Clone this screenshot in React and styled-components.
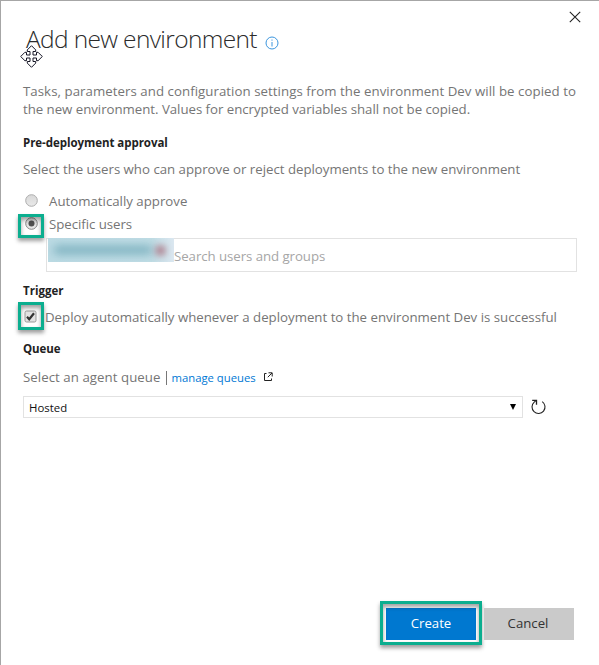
import React from 'react';
import styled, { createGlobalStyle } from 'styled-components';

const Global = createGlobalStyle`
  * { box-sizing: border-box; }
  body { margin: 0; background: #fff; overflow: hidden; }
`;

const Dialog = styled.main`
  display: flex;
  flex-direction: column;
  width: 599px;
  height: 665px;
  padding: 0 22px 0 22px;
  border-top: 1px solid #a6a6a6;
  border-left: 1px solid #a6a6a6;
  background: #fff;
  color: #757575;
  font: 13.25px/18px "Open Sans", "Noto Sans", sans-serif;
  white-space: nowrap;
`;

const Header = styled.header`
  position: relative;
  display: flex;
  align-items: flex-start;
  height: 81px;
  padding: 22px 0 0 3px;
`;

const Title = styled.h1`
  margin: 0;
  color: #2b2b2b;
  font-size: 24.5px;
  font-weight: 300;
  line-height: 32px;
  letter-spacing: -0.64px;
`;

const InfoIcon = styled.svg`
  width: 14px;
  height: 14px;
  margin: 13px 0 0 8px;
`;

const CloseButton = styled.button`
  display: flex;
  width: 12px;
  height: 12px;
  margin: -12px -4px 0 auto;
  padding: 0;
  border: 0;
  background: none;
`;

const MoveCursor = styled.svg`
  position: absolute;
  left: -3px;
  top: 44px;
  width: 23px;
  height: 23px;
`;

const Intro = styled.p`
  width: 553px;
  margin: 0;
`;

const IntroLine = styled.span`
  display: block;
  letter-spacing: ${(p) => p.$spacing || 0}px;
`;

const Heading = styled.h2`
  height: 18px;
  margin: ${(p) => p.$top}px 0 0;
  color: #222;
  font-size: 11.5px;
  font-weight: 700;
  line-height: 18px;
  letter-spacing: ${(p) => p.$spacing || 0}px;
`;

const Line = styled.div`
  display: flex;
  align-items: center;
  height: 18px;
  margin-top: ${(p) => p.$top}px;
`;

const Option = styled.label`
  position: relative;
  display: flex;
  align-items: center;
  gap: ${(p) => p.$gap}px;
  height: 18px;
  margin-top: ${(p) => p.$top}px;
  padding-left: ${(p) => p.$indent}px;
  letter-spacing: ${(p) => p.$spacing || 0}px;
`;

const Control = styled.svg`
  flex: none;
  width: 13px;
  height: 13px;
  margin-top: -1px;
  overflow: visible;
`;

const Highlight = styled.span`
  position: absolute;
  left: ${(p) => p.$left}px;
  top: ${(p) => p.$top}px;
  width: ${(p) => p.$width}px;
  height: ${(p) => p.$height}px;
  border: 3px solid #0bae8f;
  box-shadow: 0 3px 4px rgba(0, 0, 0, 0.38), inset 0 3px 4px rgba(0, 0, 0, 0.38);
  pointer-events: none;
`;

const UserField = styled.div`
  display: flex;
  align-items: flex-start;
  width: 531px;
  height: 34px;
  margin: 5px 0 0 23px;
  padding-left: 1px;
  border: 1px solid #e2e2e2;
  color: #a6a6a6;
`;

const UserChip = styled.div`
  display: flex;
  align-items: center;
  width: 126px;
  height: 24px;
  margin-top: -1px;
  overflow: hidden;
  background: linear-gradient(90deg, #bcdbe4, #c0dde5 82%, #dbe7f0);
`;

const BlurredName = styled.span`
  width: 98px;
  height: 8px;
  margin-left: 6px;
  background: #77adbc;
  filter: blur(5px);
`;

const BlurredRemove = styled.span`
  width: 9px;
  height: 9px;
  margin-left: 4px;
  background: #ac7685;
  filter: blur(3.5px);
`;

const Placeholder = styled.span`
  margin-top: 8px;
  letter-spacing: -0.06px;
`;

const Divider = styled.span`
  width: 1px;
  height: 14px;
  margin: 1px 5px 0;
  background: #777;
`;

const QueueLink = styled.a`
  color: #0078d4;
  font-size: 11.3px;
  margin-top: 1px;
`;

const ExternalIcon = styled.svg`
  width: 10px;
  height: 10px;
  margin: -1px 0 0 7px;
`;

const QueueRow = styled.div`
  display: flex;
  align-items: center;
  gap: 8px;
  margin-top: 10px;
`;

const Select = styled.div`
  display: flex;
  align-items: center;
  justify-content: space-between;
  width: 500px;
  height: 22px;
  padding: 1px 6px 0 5px;
  border: 1px solid #e2e2e2;
  color: #111;
  font-size: 11.4px;
`;

const Arrow = styled.svg`
  width: 6px;
  height: 6px;
  margin-top: -2px;
`;

const RefreshIcon = styled.svg`
  width: 15px;
  height: 16px;
`;

const Footer = styled.footer`
  display: flex;
  justify-content: flex-end;
  gap: 8px;
  margin: auto 3px 25px 0;
`;

const Button = styled.button`
  position: relative;
  width: 90px;
  height: 32px;
  padding: ${(p) => (p.$primary ? '0 0 2px' : '0 2px 2px 0')};
  border: 0;
  background: ${(p) => (p.$primary ? '#0078d0' : '#cacaca')};
  color: ${(p) => (p.$primary ? '#fff' : '#333')};
  font: 13.2px/18px "Open Sans", "Noto Sans", sans-serif;
`;

const Radio = ({ checked }) => (
  <Control viewBox="0 0 13 13">
    <defs>
      <linearGradient id="radioFill" x1="0" y1="0" x2="0" y2="1">
        <stop offset="0" stopColor="#d8d8d8" />
        <stop offset="1" stopColor="#e9e9e9" />
      </linearGradient>
    </defs>
    <circle cx="6.5" cy="6.5" r="5.8" fill="url(#radioFill)" stroke={checked ? '#888' : '#adadad'} />
    {checked && <circle cx="6.5" cy="6.5" r="3" fill="#505050" />}
  </Control>
);

export default function App() {
  return (
    <>
      <Global />
      <Dialog>
        <Header>
          <Title>Add new environment</Title>
          <InfoIcon viewBox="0 0 14 14" fill="none" stroke="#3c96de">
            <circle cx="7" cy="7" r="6" />
            <path d="M7 6v4.5M7 3.5v1.2" />
          </InfoIcon>
          <CloseButton aria-label="Close">
            <svg width="12" height="12" viewBox="0 0 12 12" fill="none" stroke="#222" strokeWidth="1.1">
              <path d="M.8.8 11.2 11.2M11.2.8.8 11.2" />
            </svg>
          </CloseButton>
          <MoveCursor viewBox="0 0 23 23" fill="#fff" stroke="#151525">
            <path d="M11.5.7 7.3 4.9v1.6h2.7V10H6.5V7.3H4.9L.7 11.5l4.2 4.2h1.6V13H10v3.5H7.3v1.6l4.2 4.2 4.2-4.2v-1.6H13V13h3.5v2.7h1.6l4.2-4.2-4.2-4.2h-1.6V10H13V6.5h2.7V4.9z" />
          </MoveCursor>
        </Header>

        <Intro>
          <IntroLine $spacing={0.05}>
            Tasks, parameters and configuration settings from the environment Dev will be copied to
          </IntroLine>
          <IntroLine $spacing={-0.03}>
            the new environment. Values for encrypted variables shall not be copied.
          </IntroLine>
        </Intro>

        <Heading $top={16} $spacing={-0.05}>Pre-deployment approval</Heading>
        <Line $top={8}>
          <IntroLine $spacing={-0.01}>
            Select the users who can approve or reject deployments to the new environment
          </IntroLine>
        </Line>
        <Option $top={14} $gap={11} $indent={2}>
          <Radio />
          Automatically approve
        </Option>
        <Option $top={5} $gap={11} $indent={2} $spacing={-0.05}>
          <Radio checked />
          Specific users
          <Highlight $left={-5} $top={-1} $width={26} $height={24} />
        </Option>
        <UserField>
          <UserChip>
            <BlurredName />
            <BlurredRemove />
          </UserChip>
          <Placeholder>Search users and groups</Placeholder>
        </UserField>

        <Heading $top={10}>Trigger</Heading>
        <Option $top={8} $gap={8} $indent={1}>
          <Control viewBox="0 0 13 13">
            <rect x="1" y="1" width="11" height="11" rx="1.5" fill="#e2e2e2" stroke="#999" />
            <path d="M3 6.8 5.2 9.2 10 3.3" fill="none" stroke="#333" strokeWidth="2.2" />
          </Control>
          Deploy automatically whenever a deployment to the environment Dev is successful
          <Highlight $left={-5} $top={-6} $width={26} $height={28} />
        </Option>

        <Heading $top={14} $spacing={-0.1}>Queue</Heading>
        <Line $top={10}>
          <IntroLine $spacing={0.05}>Select an agent queue</IntroLine>
          <Divider />
          <QueueLink>manage queues</QueueLink>
          <ExternalIcon viewBox="0 0 10 10" fill="none" stroke="#222">
            <path d="M3.5 1.5h-2v7h7v-2M5.5.8h3.7v3.7M9 1 4.8 5.2" />
          </ExternalIcon>
        </Line>
        <QueueRow>
          <Select>
            Hosted
            <Arrow viewBox="0 0 6 6"><path d="M0 0h6L3 6z" /></Arrow>
          </Select>
          <RefreshIcon viewBox="0 0 15 16" fill="none" stroke="#222" strokeWidth="1.1">
            <path d="M11.2 2.6A6.5 6.5 0 1 1 3.2 3.1L5 1.6" />
            <path d="M1.2 1.3h4.3v4.4" strokeWidth="1.3" />
          </RefreshIcon>
        </QueueRow>

        <Footer>
          <Button $primary>
            Create
            <Highlight $left={-6} $top={-7} $width={102} $height={44} />
          </Button>
          <Button>Cancel</Button>
        </Footer>
      </Dialog>
    </>
  );
}
